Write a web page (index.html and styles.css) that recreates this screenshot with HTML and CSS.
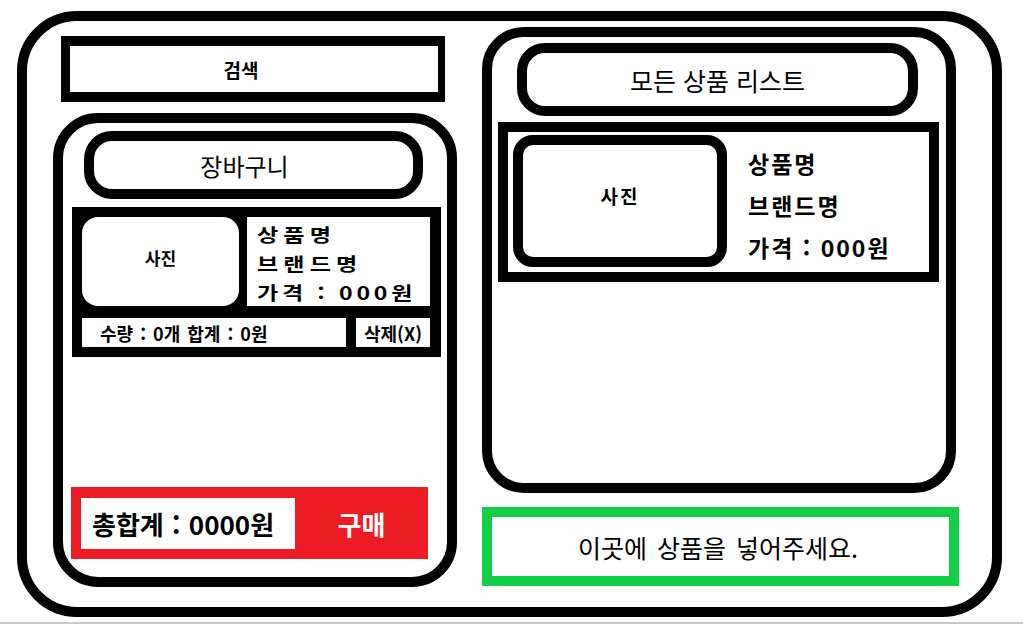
FILE: index.html
```html
<!DOCTYPE html>
<html lang="ko">
<head>
  <meta charset="UTF-8">
  <title>쇼핑몰 와이어프레임</title>
  <link rel="stylesheet" href="styles.css">
</head>
<body>

  <div class="frame">

    <!-- 왼쪽: 검색 + 장바구니 -->
    <div class="left-col">
      <div class="search">검색</div>

      <div class="cart">
        <div class="cart-title">장바구니</div>

        <div class="cart-item">
          <div class="cart-item-top">
            <div class="cart-photo">사진</div>
            <div class="cart-info">
              <div class="stretch">상품명</div>
              <div class="stretch">브랜드명</div>
              <div class="stretch price">가격 : 000원</div>
            </div>
          </div>
          <div class="cart-item-bottom">
            <div class="qty">수량 : 0개 합계 : 0원</div>
            <div class="delete">삭제(X)</div>
          </div>
        </div>

        <div class="total-bar">
          <div class="total">총합계 : 0000원</div>
          <div class="buy">구매</div>
        </div>
      </div>
    </div>

    <!-- 오른쪽: 상품 리스트 -->
    <div class="right-col">
      <div class="products">
        <div class="products-title">모든 상품 리스트</div>
        <div class="product">
          <div class="product-photo">사진</div>
          <div class="product-info">
            <div>상품명</div>
            <div>브랜드명</div>
            <div>가격 : 000원</div>
          </div>
        </div>
      </div>
      <div class="drop">이곳에 상품을 넣어주세요.</div>
    </div>

  </div>

  <div class="edge"></div>

</body>
</html>
```

FILE: styles.css
```css
* { box-sizing: border-box; }
body { margin: 0; font-family: "Noto Sans CJK KR", "Liberation Sans", sans-serif; color: #000; background: #fff; }

.frame {
  margin: 11px 0 0 17px;
  width: 985px;
  height: 606px;
  border: 10px solid #000;
  border-radius: 60px;
  display: flex;
  gap: 25px;
  padding-left: 26px;
}

/* 왼쪽 */
.left-col { width: 404px; padding-top: 15px; }

.search {
  margin-left: 8px;
  width: 384px;
  height: 66px;
  border: solid #000;
  border-width: 10px 7px 10px 9px;
  display: flex;
  align-items: center;
  justify-content: center;
  padding-right: 26px;
  font-size: 19px;
  font-weight: bold;
}

.cart {
  margin-top: 11px;
  height: 474px;
  border: 10px solid #000;
  border-radius: 45px;
  display: flex;
  flex-direction: column;
}

.cart-title {
  margin: 8px 0 0 21px;
  width: 339px;
  height: 68px;
  border: 10px solid #000;
  border-radius: 28px;
  display: flex;
  align-items: center;
  justify-content: center;
  padding-right: 18px;
  font-size: 24px;
}

.cart-item {
  margin: 8px 0 0 9px;
  width: 369px;
  height: 150px;
  background: #000;
  padding: 10px 11px 10px 10px;
}
.cart-item-top { display: flex; gap: 8px; height: 89px; }
.cart-photo {
  width: 157px;
  background: #fff;
  border-radius: 16px;
  display: flex;
  align-items: center;
  justify-content: center;
  padding-bottom: 9px;
  font-size: 17px;
  font-weight: bold;
}
.cart-info { flex: 1; background: #fff; padding: 3px 0 0 10px; overflow: hidden; }
.stretch {
  line-height: 29px;
  font-size: 18px;
  font-weight: bold;
  letter-spacing: 4px;
  white-space: nowrap;
  transform: scaleX(1.28);
  transform-origin: left;
}
.stretch.price { letter-spacing: 3px; }

.cart-item-bottom { display: flex; gap: 10px; margin-top: 12px; height: 29px; }
.qty {
  width: 264px;
  background: #fff;
  padding-left: 18px;
  display: flex;
  align-items: center;
  font-size: 18px;
  font-weight: bold;
  word-spacing: 2px;
  white-space: nowrap;
}
.delete {
  flex: 1;
  background: #fff;
  display: flex;
  align-items: center;
  justify-content: center;
  font-size: 18px;
  font-weight: bold;
}

.total-bar {
  margin: auto 0 18px 8px;
  width: 357px;
  height: 72px;
  background: #ed1c24;
  padding: 11px 0 11px 10px;
  display: flex;
  align-items: center;
}
.total {
  width: 214px;
  height: 51px;
  background: #fff;
  padding-left: 11px;
  display: flex;
  align-items: center;
  font-size: 26px;
  font-weight: bold;
  word-spacing: 1px;
  white-space: nowrap;
  overflow: hidden;
}
.buy { flex: 1; text-align: center; color: #fff; font-size: 26px; font-weight: bold; }

/* 오른쪽 */
.right-col { width: 477px; }

.products {
  margin-top: 6px;
  width: 474px;
  height: 466px;
  border: 10px solid #000;
  border-radius: 42px;
}
.products-title {
  margin: 6px 0 0 25px;
  width: 401px;
  height: 73px;
  border: 10px solid #000;
  border-radius: 28px;
  display: flex;
  align-items: center;
  justify-content: center;
  font-size: 25px;
}
.product {
  margin: 6px 0 0 6px;
  width: 441px;
  height: 160px;
  border: 10px solid #000;
  display: flex;
  padding: 3px 0 0 5px;
}
.product-photo {
  width: 214px;
  height: 132px;
  border: 10px solid #000;
  border-radius: 20px;
  display: flex;
  align-items: center;
  justify-content: center;
  padding-bottom: 12px;
  font-size: 19px;
  font-weight: bold;
  letter-spacing: 2px;
}
.product-info {
  padding: 7px 0 0 21px;
  font-size: 23px;
  font-weight: bold;
  letter-spacing: 2px;
  line-height: 42px;
  white-space: nowrap;
}

.drop {
  margin-top: 14px;
  width: 477px;
  height: 79px;
  border: 10px solid #12cf46;
  display: flex;
  align-items: center;
  justify-content: center;
  padding-right: 5px;
  font-size: 25px;
  word-spacing: 3px;
}

.edge { margin-top: 5px; border-top: 2px solid #c8c8c8; }
```
